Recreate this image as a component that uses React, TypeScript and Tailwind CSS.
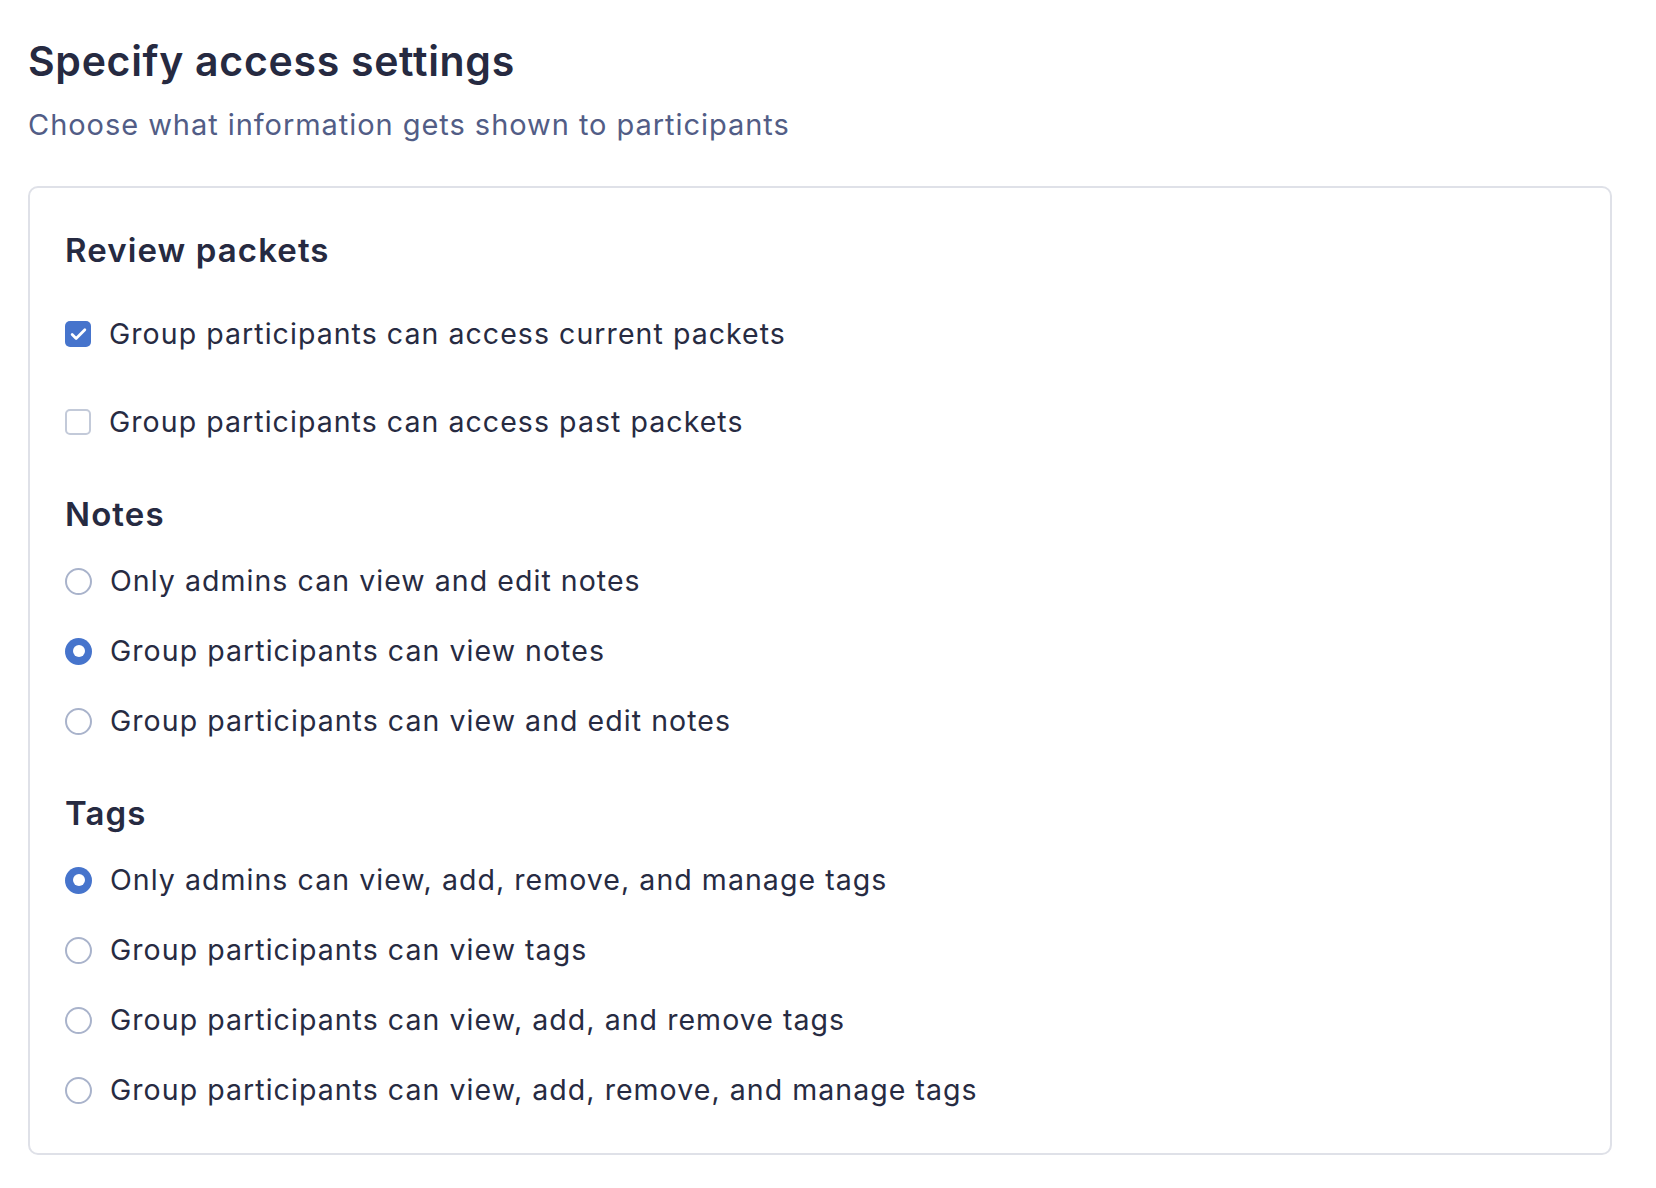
import { Check } from 'lucide-react';

const font = { fontFamily: 'Inter, "Noto Sans", sans-serif' };

const Checkbox = ({ checked }: { checked: boolean }) =>
  checked ? (
    <span className="flex h-[26px] w-[26px] shrink-0 items-center justify-center rounded-[5px] bg-[#4674cc]">
      <Check className="text-white" size={19} strokeWidth={3.5} />
    </span>
  ) : (
    <span className="h-[26px] w-[26px] shrink-0 rounded-[5px] border-2 border-[#c3cad9] bg-white" />
  );

const Radio = ({ checked }: { checked: boolean }) =>
  checked ? (
    <span className="flex h-[27px] w-[27px] shrink-0 items-center justify-center rounded-full bg-[#4674cc]">
      <span className="h-[12px] w-[12px] rounded-full bg-white" />
    </span>
  ) : (
    <span className="h-[27px] w-[27px] shrink-0 rounded-full border-2 border-[#a9b3cb] bg-white" />
  );

const Row = ({ control, label }: { control: React.ReactNode; label: string }) => (
  <label className="flex h-[40px] items-center gap-[18px]">
    {control}
    <span className="text-[28.5px] leading-[40px] tracking-[1.05px] text-[#272b42]">{label}</span>
  </label>
);

const Heading = ({ children }: { children: React.ReactNode }) => (
  <h3 className="text-[33px] font-semibold leading-[40px] tracking-[1.1px] text-[#262a41]">{children}</h3>
);

const App = () => {
  const notes = [
    { label: 'Only admins can view and edit notes', checked: false },
    { label: 'Group participants can view notes', checked: true },
    { label: 'Group participants can view and edit notes', checked: false },
  ];
  const tags = [
    { label: 'Only admins can view, add, remove, and manage tags', checked: true },
    { label: 'Group participants can view tags', checked: false },
    { label: 'Group participants can view, add, and remove tags', checked: false },
    { label: 'Group participants can view, add, remove, and manage tags', checked: false },
  ];

  return (
    <div className="min-h-screen bg-white pl-[28px] pr-[44px] pt-[36px]" style={font}>
      <h1 className="text-[41px] font-semibold leading-[50px] tracking-[0.7px] text-[#262a41]">
        Specify access settings
      </h1>
      <p className="mt-[21px] text-[29px] leading-[36px] tracking-[0.95px] text-[#525d86]">
        Choose what information gets shown to participants
      </p>

      <div className="mt-[43px] rounded-[10px] border-2 border-[#dfe1e8] pb-[43px] pl-[35px] pt-[42px]">
        <Heading>Review packets</Heading>
        <div className="mt-[44px] flex flex-col gap-[48px]">
          <Row control={<Checkbox checked />} label="Group participants can access current packets" />
          <Row control={<Checkbox checked={false} />} label="Group participants can access past packets" />
        </div>

        <div className="mt-[52px]">
          <Heading>Notes</Heading>
        </div>
        <div className="mt-[27px] flex flex-col gap-[30px]">
          {notes.map((n) => (
            <Row key={n.label} control={<Radio checked={n.checked} />} label={n.label} />
          ))}
        </div>

        <div className="mt-[52px]">
          <Heading>Tags</Heading>
        </div>
        <div className="mt-[27px] flex flex-col gap-[30px]">
          {tags.map((t) => (
            <Row key={t.label} control={<Radio checked={t.checked} />} label={t.label} />
          ))}
        </div>
      </div>
    </div>
  );
};

export default App;
